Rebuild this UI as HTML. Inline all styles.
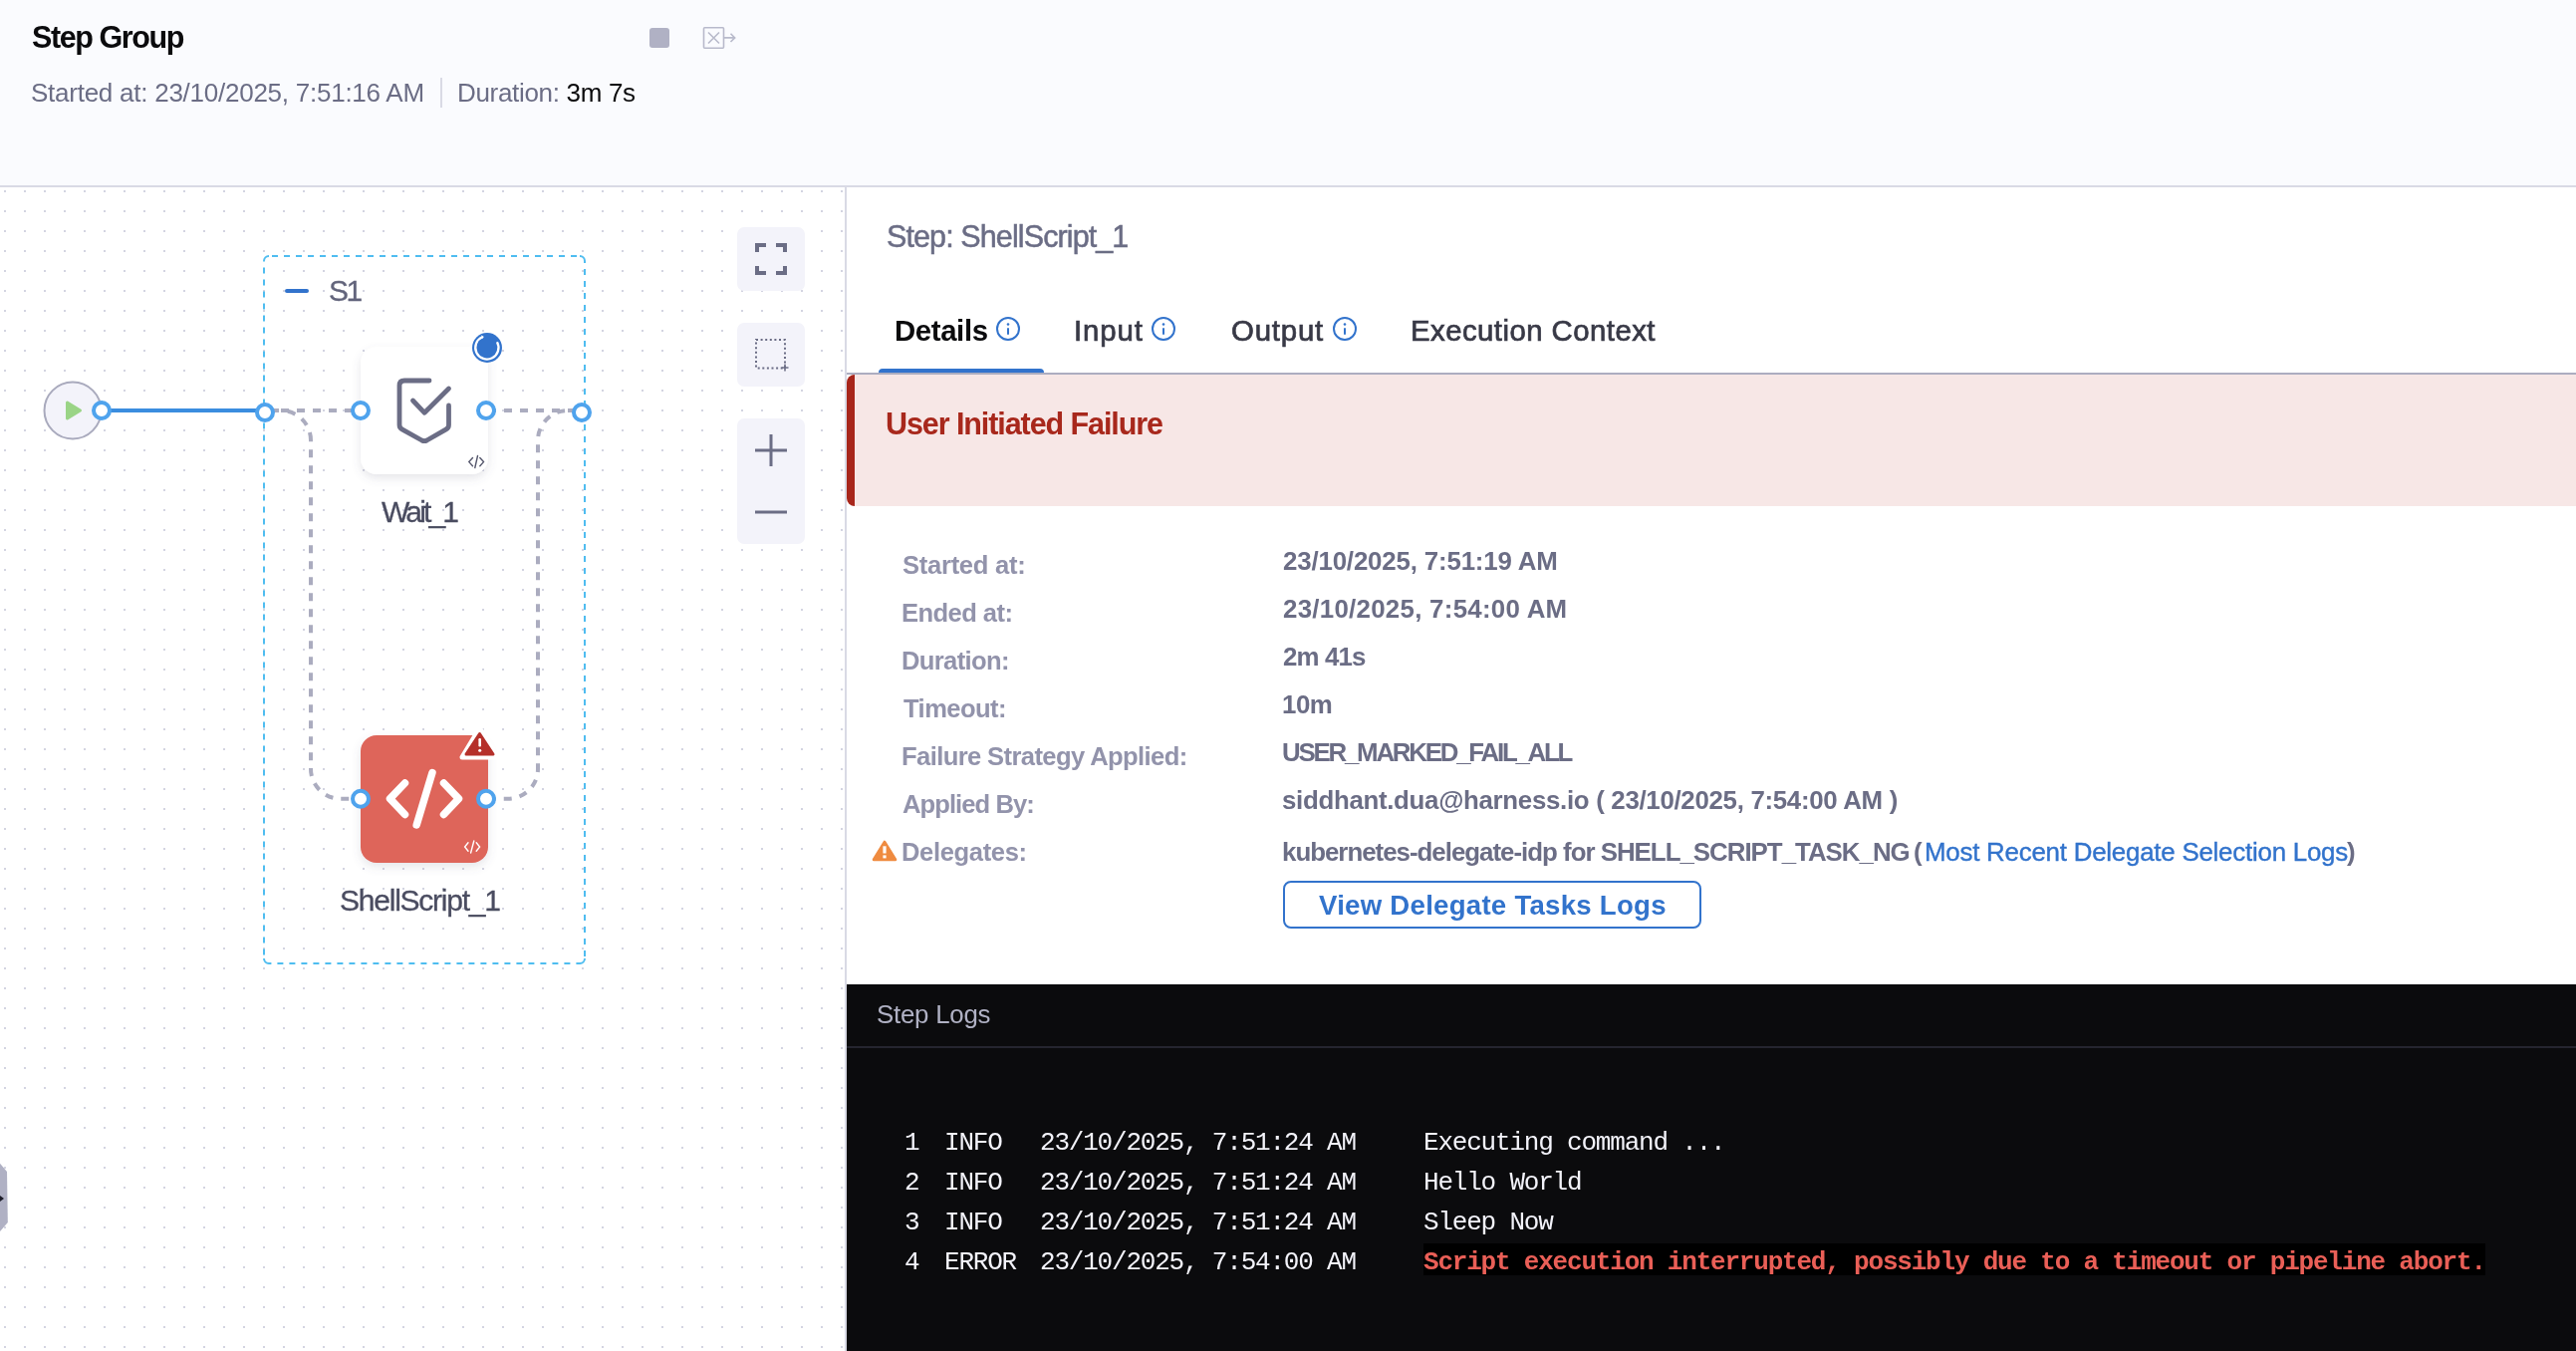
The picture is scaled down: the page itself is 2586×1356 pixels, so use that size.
<!DOCTYPE html>
<html><head><meta charset="utf-8">
<style>
*{margin:0;padding:0;box-sizing:border-box}
html,body{width:2586px;height:1356px;overflow:hidden;background:#fff;font-family:"Liberation Sans",sans-serif}
.a{position:absolute;white-space:nowrap;will-change:transform}
#hdr{position:absolute;left:0;top:0;width:2586px;height:186px;background:#fafbfe}
#hdrb{position:absolute;left:0;top:186px;width:2586px;height:2px;background:#d9dae5}
#gfx{position:absolute;left:0;top:0}
</style></head>
<body>
<div id="hdr"></div>
<div id="hdrb"></div>

<svg id="gfx" width="2586" height="1356" viewBox="0 0 2586 1356">
  <defs>
    <pattern id="dots" x="0" y="0" width="20" height="20" patternUnits="userSpaceOnUse">
      <rect x="4" y="11" width="2" height="2" fill="#d3d4e1"/>
    </pattern>
    <filter id="sh" x="-30%" y="-30%" width="160%" height="160%">
      <feDropShadow dx="0" dy="4" stdDeviation="5" flood-color="#60617a" flood-opacity="0.16"/>
    </filter>
  </defs>
  <!-- canvas -->
  <rect x="0" y="188" width="848" height="1168" fill="#ffffff"/>
  <rect x="0" y="188" width="848" height="1168" fill="url(#dots)"/>
  <rect x="848" y="188" width="2" height="1168" fill="#d9dae5"/>

  <!-- header icons -->
  <rect x="652" y="28" width="20" height="20" rx="3" fill="#b0b1c4"/>
  <g fill="none" stroke="#b8bacb" stroke-width="1.6">
    <rect x="706.5" y="27.8" width="20" height="20.5" rx="1"/>
    <path d="M711 32.5 L722 43.5 M722 32.5 L711 43.5"/>
    <path d="M727 37.9 H737.5 M733.5 33.8 L737.7 37.9 L733.5 42"/>
  </g>

  <!-- step group dashed box -->
  <g fill="none" stroke="#4fbdf0" stroke-width="2">
    <path d="M270 257 H582" stroke-dasharray="6 6" stroke-dashoffset="-3"/>
    <path d="M265 262 V962" stroke-dasharray="6 6" stroke-dashoffset="-6.4"/>
    <path d="M587 262 V962" stroke-dasharray="6 6" stroke-dashoffset="-8"/>
    <path d="M270 967 H582" stroke-dasharray="6 6" stroke-dashoffset="-8.4"/>
    <path d="M265 262 A5 5 0 0 1 270 257 M582 257 A5 5 0 0 1 587 262 M587 962 A5 5 0 0 1 582 967 M270 967 A5 5 0 0 1 265 962"/>
  </g>
  <line x1="288" y1="292" x2="308" y2="292" stroke="#3273cc" stroke-width="4" stroke-linecap="round"/>

  <!-- connectors -->
  <line x1="102" y1="412" x2="266" y2="412" stroke="#3b8ddf" stroke-width="4"/>
  <g fill="none" stroke="#abacbf" stroke-width="4" stroke-dasharray="8 8">
    <path d="M266 412 H362"/>
    <path d="M274 412 H280" stroke-dasharray="none"/>
    <path d="M490 412 H584"/>
    <path d="M282 412 A30 30 0 0 1 312 442" stroke-dashoffset="-7"/>
    <path d="M312 442 V771" stroke-dashoffset="-9.3"/>
    <path d="M312 771 A30 30 0 0 0 342 801.7 H362"/>
    <path d="M570 412 A30 30 0 0 0 540 442" stroke-dashoffset="-3"/>
    <path d="M540 442 V771" stroke-dashoffset="-4.3"/>
    <path d="M540 771 A30 30 0 0 1 510 801.7 H488" stroke-dashoffset="-12"/>
  </g>

  <!-- start node -->
  <circle cx="73" cy="412" r="28.5" fill="#f3f3fa" stroke="#a9aabd" stroke-width="2"/>
  <path d="M67.5 404 L80.5 412 L67.5 420 Z" fill="#9ad486" stroke="#9ad486" stroke-width="3" stroke-linejoin="round"/>

  <!-- Wait_1 card -->
  <rect x="362" y="348" width="128" height="128" rx="16" fill="#ffffff" filter="url(#sh)"/>
  <g fill="none" stroke="#6b6d85" stroke-width="4.8" stroke-linecap="round" stroke-linejoin="round">
    <path d="M431 382 H406 Q401 382 401 387 V426.5 Q401 429.5 404 431.2 L423.5 442 Q426 443.3 428.5 442 L447.5 431.2 Q450.5 429.5 450.5 426.5 V407"/>
    <path d="M414.5 402 L426.2 414.3 L450.5 390"/>
  </g>
  <g fill="none" stroke="#55576c" stroke-width="1.4" stroke-linecap="round">
    <path d="M474.5 459.5 L470.8 463.6 L474.5 467.7 M481.8 459.5 L485.5 463.6 L481.8 467.7 M479.5 457.5 L476.8 469.5"/>
  </g>
  <!-- running status -->
  <circle cx="489" cy="349" r="15" fill="#3273cc"/>
  <path d="M499 343.3 A11.6 11.6 0 1 1 484.2 338.3" fill="none" stroke="#ffffff" stroke-width="2.3"/>
  <path d="M485.8 337.9 L483.2 336.3 L484.3 340.1 Z" fill="#ffffff"/>

  <!-- ShellScript_1 card -->
  <rect x="362" y="738" width="128" height="128" rx="16" fill="#de655a" filter="url(#sh)"/>
  <g fill="none" stroke="#ffffff" stroke-width="7.5" stroke-linecap="round" stroke-linejoin="round">
    <path d="M406.5 786 L391.5 801.7 L406.5 817.5"/>
    <path d="M445.5 786 L460.5 801.7 L445.5 817.5"/>
    <path d="M434 775.5 L418.2 828"/>
  </g>
  <g fill="none" stroke="#ffffff" stroke-width="1.4" stroke-linecap="round">
    <path d="M470 845.8 L466.6 850 L470 854.2 M478.2 845.8 L481.6 850 L478.2 854.2 M475.8 844 L472.6 856"/>
  </g>
  <!-- warning badge -->
  <path d="M481.5 731 L499.5 760 L464 760 Z" fill="#ffffff" stroke="#ffffff" stroke-width="5" stroke-linejoin="round"/>
  <path d="M481.5 736.5 L495 757 L468 757 Z" fill="#b5302a" stroke="#b5302a" stroke-width="3" stroke-linejoin="round"/>
  <rect x="480.4" y="741" width="2.6" height="8.5" rx="1.2" fill="#ffffff"/>
  <circle cx="481.7" cy="753.2" r="1.5" fill="#ffffff"/>

  <!-- ports -->
  <g fill="#ffffff" stroke="#4fa3ed" stroke-width="4">
    <circle cx="102" cy="412" r="8"/>
    <circle cx="266" cy="414" r="8"/>
    <circle cx="362" cy="412" r="8"/>
    <circle cx="488" cy="412" r="8"/>
    <circle cx="584" cy="414" r="8"/>
    <circle cx="362" cy="801.7" r="8"/>
    <circle cx="488" cy="801.7" r="8"/>
  </g>

  <!-- canvas tools -->
  <rect x="740" y="228" width="68" height="64" rx="7" fill="#f3f3fa"/>
  <rect x="740" y="324" width="68" height="64" rx="7" fill="#f3f3fa"/>
  <rect x="740" y="420" width="68" height="126" rx="7" fill="#f3f3fa"/>
  <g fill="none" stroke="#6b6d85" stroke-width="4">
    <path d="M760 253 V246 H769 M779 246 H788 V253 M788 267 V274 H779 M769 274 H760 V267"/>
  </g>
  <rect x="759" y="341" width="29" height="28.5" fill="none" stroke="#6b6d85" stroke-width="2" stroke-dasharray="2 2.6"/>
  <path d="M788 365.5 V372.5 M784.5 369 H791.5" stroke="#6b6d85" stroke-width="1.6"/>
  <g stroke="#6b6d85" stroke-width="3">
    <path d="M758 452 H790 M774 436 V468"/>
    <path d="M758 514 H790"/>
  </g>

  <!-- left edge partial tab -->
  <path d="M0 1167.8 L7 1176 L7.8 1227 L0 1236 Z" fill="#b0b1c4"/>
  <path d="M0 1200 L4 1203 L0 1206 Z" fill="#1c1c28"/>
</svg>

<!-- right panel -->
<div class="a" style="left:850px;top:188px;width:1736px;height:1168px;background:#ffffff"></div>
<div class="a" style="left:882px;top:370px;width:166px;height:4px;background:#3273cc;border-radius:4px 4px 0 0"></div>
<div class="a" style="left:850px;top:374px;width:1736px;height:2px;background:#acadc0"></div>
<div class="a" style="left:850px;top:376px;width:1736px;height:132px;background:#f7e7e6;border-left:8px solid #a8261b;border-radius:8px 0 0 8px"></div>
<div class="a" style="left:1288px;top:884px;width:420px;height:48px;border:2px solid #3273cc;border-radius:8px"></div>
<div class="a" style="left:850px;top:988px;width:1736px;height:368px;background:#0b0b0d"></div>
<div class="a" style="left:850px;top:1050px;width:1736px;height:2px;background:#25252f"></div>
<div class="a" style="left:1429px;top:1248px;width:1066px;height:32px;background:#000000"></div>
<svg class="a" style="left:850px;top:188px" width="1736" height="800" viewBox="850 188 1736 800">
  <g fill="none" stroke="#3273cc" stroke-width="2">
    <circle cx="1012" cy="330" r="11"/>
    <circle cx="1168" cy="330" r="11"/>
    <circle cx="1350" cy="330" r="11"/>
  </g>
  <g fill="#3273cc">
    <rect x="1011" y="329" width="2" height="7" rx="1"/><circle cx="1012" cy="325.5" r="1.3"/>
    <rect x="1167" y="329" width="2" height="7" rx="1"/><circle cx="1168" cy="325.5" r="1.3"/>
    <rect x="1349" y="329" width="2" height="7" rx="1"/><circle cx="1350" cy="325.5" r="1.3"/>
  </g>
  <path d="M888 845.2 L898.8 862.8 L877.2 862.8 Z" fill="#ef8b40" stroke="#ef8b40" stroke-width="3" stroke-linejoin="round"/>
  <rect x="886.4" y="849.3" width="3.2" height="7.2" fill="#ffffff"/>
  <rect x="886.4" y="858.4" width="3.2" height="3" fill="#ffffff"/>
</svg>

<!-- texts -->
<div class="a" id="t_sg" style="left:31.8px;top:22.2px;font-size:30.52px;line-height:30.52px;letter-spacing:-1.423px;font-weight:700;color:#0b0b0d">Step Group</div>
<div class="a" id="t_st" style="left:31.2px;top:80.0px;font-size:26.02px;line-height:26.02px;letter-spacing:-0.256px;color:#6b6d85">Started at: 23/10/2025, 7:51:16 AM</div>
<div class="a" id="t_du" style="left:458.8px;top:80.0px;font-size:26.02px;line-height:26.02px;letter-spacing:-0.328px;color:#6b6d85">Duration: <span style="color:#0b0b0d">3m 7s</span></div>
<div class="a" id="t_s1" style="-webkit-text-stroke:0.3px #62647b;left:329.5px;top:276.6px;font-size:29.94px;line-height:29.94px;letter-spacing:-2.5px;color:#62647b">S1</div>
<div class="a" id="t_w1" style="-webkit-text-stroke:0.3px #4a4c60;left:383.1px;top:499.4px;font-size:30.09px;line-height:30.09px;letter-spacing:-2.913px;color:#4a4c60">Wait_1</div>
<div class="a" id="t_ss1" style="-webkit-text-stroke:0.3px #4a4c60;left:340.7px;top:889.4px;font-size:30.09px;line-height:30.09px;letter-spacing:-1.267px;color:#4a4c60">ShellScript_1</div>
<div class="a" id="t_step" style="-webkit-text-stroke:0.5px #6b6d85;left:889.7px;top:222.2px;font-size:30.52px;line-height:30.52px;letter-spacing:-0.9px;color:#6b6d85">Step: ShellScript_1</div>
<div class="a" id="t_tdet" style="left:897.7px;top:317.1px;font-size:29.36px;line-height:29.36px;letter-spacing:-0.379px;font-weight:700;color:#0b0b0d">Details</div>
<div class="a" id="t_tin" style="-webkit-text-stroke:0.7px #383946;left:1078.1px;top:317.1px;font-size:29.36px;line-height:29.36px;letter-spacing:0.888px;color:#383946">Input</div>
<div class="a" id="t_tout" style="-webkit-text-stroke:0.7px #383946;left:1235.8px;top:317.1px;font-size:29.36px;line-height:29.36px;letter-spacing:0.817px;color:#383946">Output</div>
<div class="a" id="t_texe" style="-webkit-text-stroke:0.7px #383946;left:1416.0px;top:317.1px;font-size:29.36px;line-height:29.36px;letter-spacing:0.452px;color:#383946">Execution Context</div>
<div class="a" id="t_uif" style="left:889.4px;top:410.2px;font-size:30.52px;line-height:30.52px;letter-spacing:-1.087px;font-weight:700;color:#a8281c">User Initiated Failure</div>
<div class="a" id="t_l1" style="left:906.1px;top:555.3px;font-size:25.58px;line-height:25.58px;letter-spacing:-0.282px;font-weight:700;color:#9293ab">Started at:</div>
<div class="a" id="t_l2" style="left:905.3px;top:603.3px;font-size:25.58px;line-height:25.58px;letter-spacing:-0.579px;font-weight:700;color:#9293ab">Ended at:</div>
<div class="a" id="t_l3" style="left:905.3px;top:651.3px;font-size:25.58px;line-height:25.58px;letter-spacing:-0.647px;font-weight:700;color:#9293ab">Duration:</div>
<div class="a" id="t_l4" style="left:906.6px;top:699.3px;font-size:25.58px;line-height:25.58px;letter-spacing:-0.565px;font-weight:700;color:#9293ab">Timeout:</div>
<div class="a" id="t_l5" style="left:905.3px;top:747.3px;font-size:25.58px;line-height:25.58px;letter-spacing:-0.608px;font-weight:700;color:#9293ab">Failure Strategy Applied:</div>
<div class="a" id="t_l6" style="left:906.1px;top:795.3px;font-size:25.58px;line-height:25.58px;letter-spacing:-0.937px;font-weight:700;color:#9293ab">Applied By:</div>
<div class="a" id="t_l7" style="left:905.3px;top:843.3px;font-size:25.58px;line-height:25.58px;letter-spacing:-0.372px;font-weight:700;color:#9293ab">Delegates:</div>
<div class="a" id="t_v1" style="left:1287.7px;top:551.1px;font-size:25.87px;line-height:25.87px;letter-spacing:-0.168px;font-weight:700;color:#6b6d85">23/10/2025, 7:51:19 AM</div>
<div class="a" id="t_v2" style="left:1287.7px;top:599.1px;font-size:25.87px;line-height:25.87px;letter-spacing:0.275px;font-weight:700;color:#6b6d85">23/10/2025, 7:54:00 AM</div>
<div class="a" id="t_v3" style="left:1287.7px;top:647.1px;font-size:25.87px;line-height:25.87px;letter-spacing:-0.842px;font-weight:700;color:#6b6d85">2m 41s</div>
<div class="a" id="t_v4" style="left:1286.9px;top:695.1px;font-size:25.87px;line-height:25.87px;letter-spacing:-0.447px;font-weight:700;color:#6b6d85">10m</div>
<div class="a" id="t_v5" style="left:1287.3px;top:743.1px;font-size:25.87px;line-height:25.87px;letter-spacing:-2.229px;font-weight:700;color:#6b6d85">USER_MARKED_FAIL_ALL</div>
<div class="a" id="t_v6" style="left:1287.3px;top:791.1px;font-size:25.87px;line-height:25.87px;letter-spacing:-0.312px;font-weight:700;color:#6b6d85">siddhant.dua@harness.io ( 23/10/2025, 7:54:00 AM )</div>
<div class="a" id="t_v7" style="left:1286.5px;top:843.1px;font-size:25.87px;line-height:25.87px;letter-spacing:-1.001px;font-weight:700;color:#6b6d85">kubernetes-delegate-idp for SHELL_SCRIPT_TASK_NG</div>
<div class="a" id="t_lnk" style="-webkit-text-stroke:0.4px #3273cc;left:1931.7px;top:843.1px;font-size:25.87px;line-height:25.87px;letter-spacing:-0.221px;color:#3273cc">Most Recent Delegate Selection Logs</div>
<div class="a" id="t_btn" style="left:1323.8px;top:894.6px;font-size:27.62px;line-height:27.62px;letter-spacing:0.254px;font-weight:700;color:#3273cc">View Delegate Tasks Logs</div>
<div class="a" id="t_logs" style="left:879.7px;top:1005.9px;font-size:25.87px;line-height:25.87px;letter-spacing:-0.246px;color:#b0b1c4">Step Logs</div>
<div class="a" style="left:442px;top:78px;width:2px;height:30px;background:#d9dae5"></div>
<div class="a" style="left:1921px;top:843.1px;font-size:25.87px;line-height:25.87px;font-weight:700;color:#6b6d85">(</div>
<div class="a" style="left:2356px;top:843.1px;font-size:25.87px;line-height:25.87px;font-weight:700;color:#6b6d85">)</div>
<!-- logs -->
<div class="a" style="left:908px;top:1134.4px;font-family:'Liberation Mono',monospace;font-size:26.0px;line-height:26.0px;letter-spacing:-1.20px;color:#f3f3fa">1</div>
<div class="a" style="left:948px;top:1134.4px;font-family:'Liberation Mono',monospace;font-size:26.0px;line-height:26.0px;letter-spacing:-1.20px;color:#f3f3fa">INFO</div>
<div class="a" style="left:1044px;top:1134.4px;font-family:'Liberation Mono',monospace;font-size:26.0px;line-height:26.0px;letter-spacing:-1.20px;color:#f3f3fa">23/10/2025, 7:51:24 AM</div>
<div class="a" style="left:1429px;top:1134.4px;font-family:'Liberation Mono',monospace;font-size:26.0px;line-height:26.0px;letter-spacing:-1.20px;color:#f3f3fa">Executing command ...</div>
<div class="a" style="left:908px;top:1174.3px;font-family:'Liberation Mono',monospace;font-size:26.0px;line-height:26.0px;letter-spacing:-1.20px;color:#f3f3fa">2</div>
<div class="a" style="left:948px;top:1174.3px;font-family:'Liberation Mono',monospace;font-size:26.0px;line-height:26.0px;letter-spacing:-1.20px;color:#f3f3fa">INFO</div>
<div class="a" style="left:1044px;top:1174.3px;font-family:'Liberation Mono',monospace;font-size:26.0px;line-height:26.0px;letter-spacing:-1.20px;color:#f3f3fa">23/10/2025, 7:51:24 AM</div>
<div class="a" style="left:1429px;top:1174.3px;font-family:'Liberation Mono',monospace;font-size:26.0px;line-height:26.0px;letter-spacing:-1.20px;color:#f3f3fa">Hello World</div>
<div class="a" style="left:908px;top:1214.3px;font-family:'Liberation Mono',monospace;font-size:26.0px;line-height:26.0px;letter-spacing:-1.20px;color:#f3f3fa">3</div>
<div class="a" style="left:948px;top:1214.3px;font-family:'Liberation Mono',monospace;font-size:26.0px;line-height:26.0px;letter-spacing:-1.20px;color:#f3f3fa">INFO</div>
<div class="a" style="left:1044px;top:1214.3px;font-family:'Liberation Mono',monospace;font-size:26.0px;line-height:26.0px;letter-spacing:-1.20px;color:#f3f3fa">23/10/2025, 7:51:24 AM</div>
<div class="a" style="left:1429px;top:1214.3px;font-family:'Liberation Mono',monospace;font-size:26.0px;line-height:26.0px;letter-spacing:-1.20px;color:#f3f3fa">Sleep Now</div>
<div class="a" style="left:908px;top:1254.3px;font-family:'Liberation Mono',monospace;font-size:26.0px;line-height:26.0px;letter-spacing:-1.20px;color:#f3f3fa">4</div>
<div class="a" style="left:948px;top:1254.3px;font-family:'Liberation Mono',monospace;font-size:26.0px;line-height:26.0px;letter-spacing:-1.20px;color:#f3f3fa">ERROR</div>
<div class="a" style="left:1044px;top:1254.3px;font-family:'Liberation Mono',monospace;font-size:26.0px;line-height:26.0px;letter-spacing:-1.20px;color:#f3f3fa">23/10/2025, 7:54:00 AM</div>
<div class="a" style="left:1429px;top:1254.3px;font-family:'Liberation Mono',monospace;font-size:26.0px;line-height:26.0px;letter-spacing:-1.20px;color:#ea5f57;font-weight:700">Script execution interrupted, possibly due to a timeout or pipeline abort.</div>
</body></html>
